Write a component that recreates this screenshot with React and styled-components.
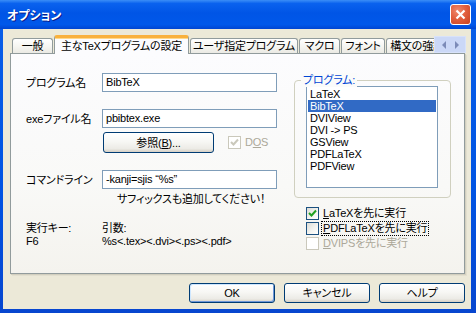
import React from 'react';
import styled, { createGlobalStyle, css } from 'styled-components';

const uiFont = `"Liberation Sans", "Noto Sans CJK JP", sans-serif`;

const GlobalStyle = createGlobalStyle`
  html, body {
    margin: 0;
    padding: 0;
    background: #ffffff;
  }
  body {
    font-family: ${uiFont};
    font-size: 11px;
    letter-spacing: -0.2px;
    font-feature-settings: "palt";
    color: #000000;
  }
`;

const Window = styled.div`
  width: 476px;
  height: 313px;
  display: flex;
  flex-direction: column;
  background: linear-gradient(180deg, #0a5fe8 0%, #0054e3 60%, #0746cf 100%);
  overflow: hidden;
`;

const TitleBar = styled.div`
  flex: none;
  height: 29px;
  display: flex;
  align-items: center;
  justify-content: space-between;
  padding: 0 5px 0 7px;
  background: linear-gradient(
    180deg,
    #3b8ef7 0%,
    #0a62ee 12%,
    #0055e6 45%,
    #0058ea 85%,
    #0045d2 100%
  );
`;

const Title = styled.div`
  color: #ffffff;
  font-weight: bold;
  font-size: 12px;
  letter-spacing: 0;
  text-shadow: 1px 1px 0 #0a1c8a;
`;

const CloseButton = styled.div`
  width: 21px;
  height: 21px;
  box-sizing: border-box;
  border: 1px solid #ffffff;
  border-radius: 3px;
  background: radial-gradient(circle at 35% 30%, #f08a6e 0%, #e2603f 45%, #c7401f 100%);
  display: flex;
  align-items: center;
  justify-content: center;
`;

const Body = styled.div`
  flex: 1;
  margin: 0 5px 4px 3px;
  background: #ece9d8;
  display: flex;
  flex-direction: column;
  padding: 6px 6px 0 7px;
`;

const TabStrip = styled.div`
  position: relative;
  z-index: 1;
  height: 18px;
  display: flex;
  align-items: flex-end;
  gap: 1px;
  padding-left: 2px;
`;

const Tab = styled.div`
  flex: none;
  width: ${p => p.$w}px;
  box-sizing: border-box;
  height: 15px;
  border: 1px solid #919b9c;
  border-bottom: none;
  border-radius: 3px 3px 0 0;
  background: linear-gradient(180deg, #ffffff 0%, #f6f6f2 50%, #ebeae4 100%);
  display: flex;
  align-items: center;
  justify-content: center;
  white-space: nowrap;
  overflow: hidden;
  line-height: 13px;
  padding-top: 1px;

  ${p =>
    p.$active &&
    css`
      height: 19px;
      margin-bottom: -1px;
      border-top: 3px solid #f9b13d;
      background: #fcfcfe;
      padding-top: 0;
      box-shadow: inset 0 1px 0 #ffd88a;
    `}
`;

const TabScroll = styled.div`
  position: absolute;
  right: -1px;
  top: 1px;
  width: 32px;
  height: 17px;
  box-sizing: border-box;
  background: #cbd8f7;
  border: 1px solid #d8e2fa;
  display: flex;
  align-items: center;
  justify-content: space-around;
  padding: 0 3px;
`;

const Panel = styled.div`
  height: 221px;
  box-sizing: border-box;
  border: 1px solid #919b9c;
  background: linear-gradient(180deg, #fcfcfe 0%, #f9f9f7 60%, #f4f3ee 100%);
  box-shadow: 1px 1px 0 #d2cfbf, 2px 2px 0 #e2dfcf;
  display: flex;
  padding-left: 15px;
`;

const LeftCol = styled.div`
  width: 268px;
  flex: none;
  display: flex;
  flex-direction: column;
`;

const FieldRow = styled.div`
  display: grid;
  grid-template-columns: 76px 175px;
  align-items: center;
  margin-top: ${p => p.$mt}px;
`;

const FieldLabel = styled.div`
  line-height: 14px;
  white-space: nowrap;
`;

const TextInput = styled.div`
  height: 19px;
  box-sizing: border-box;
  border: 1px solid #7f9db9;
  background: #ffffff;
  padding: 0 3px;
  line-height: 17px;
  white-space: nowrap;
  overflow: hidden;
`;

const BrowseRow = styled.div`
  display: flex;
  align-items: center;
  margin-top: 4px;
  padding-left: 77px;
  gap: 14px;
`;

const Button = styled.div`
  width: ${p => p.$w}px;
  height: ${p => p.$h || 20}px;
  box-sizing: border-box;
  border: 1px solid #003c74;
  border-radius: 3px;
  background: linear-gradient(180deg, #ffffff 0%, #f7f7f4 45%, #ecebe6 82%, #d6d0c5 100%);
  display: flex;
  align-items: center;
  justify-content: center;
  white-space: nowrap;
  line-height: 14px;

  ${p =>
    p.$default &&
    css`
      box-shadow: inset 1px 1px 0 #cee7ff, inset -1px -1px 0 #6f97d8;
    `}
`;

const Hint = styled.div`
  margin-top: 4px;
  padding-left: 91px;
  line-height: 13px;
  white-space: nowrap;
`;

const InfoGrid = styled.div`
  margin-top: 16px;
  display: grid;
  grid-template-columns: 76px auto;
  line-height: 13px;
`;

const RightCol = styled.div`
  display: flex;
  flex-direction: column;
  padding-top: 26px;
`;

const GroupBox = styled.div`
  position: relative;
  width: 157px;
  height: 118px;
  box-sizing: border-box;
  border: 1px solid #d0d0bf;
  border-radius: 4px;
  padding: 5px 0 0 11px;
`;

const GroupCaption = styled.div`
  position: absolute;
  top: -8px;
  left: 6px;
  padding: 0 2px;
  line-height: 14px;
  color: #0046d5;
  background: #fbfbfa;
`;

const ListBox = styled.div`
  width: 132px;
  height: 102px;
  box-sizing: border-box;
  border: 1px solid #7f9db9;
  background: #ffffff;
  padding: 1px;
`;

const ListItem = styled.div`
  height: 12px;
  line-height: 12px;
  padding-left: 2px;
  white-space: nowrap;

  ${p =>
    p.$selected &&
    css`
      background: #316ac5;
      color: #ffffff;
    `}
`;

const CheckList = styled.div`
  margin-top: 8px;
  padding-left: 12px;
  display: flex;
  flex-direction: column;
`;

const CheckRow = styled.div`
  height: 15px;
  display: flex;
  align-items: center;
  gap: 3px;
  color: ${p => (p.$disabled ? '#aca899' : '#000000')};
  white-space: nowrap;
`;

const CheckBox = styled.div`
  width: 13px;
  height: 13px;
  flex: none;
  box-sizing: border-box;
  border: 1px solid ${p => (p.$disabled ? '#cac8bb' : '#1c5180')};
  background: ${p =>
    p.$disabled ? '#ffffff' : 'linear-gradient(135deg, #dcdcd7 0%, #f3f3ef 55%, #ffffff 100%)'};
  display: flex;
  align-items: center;
  justify-content: center;
`;

const CheckText = styled.span`
  line-height: 13px;
  padding: 0 1px;
  outline: ${p => (p.$focus ? '1px dotted #000000' : 'none')};
`;

const Footer = styled.div`
  display: flex;
  justify-content: flex-end;
  gap: 9px;
  margin-top: 9px;
`;

function Check({ checked, disabled, focus, children }) {
  return (
    <CheckRow $disabled={disabled}>
      <CheckBox $disabled={disabled}>
        {checked && (
          <svg width="9" height="9" viewBox="0 0 9 9">
            <polyline
              points="1,4 3.5,6.5 8,1.5"
              fill="none"
              stroke={disabled ? '#cac8bb' : '#21a121'}
              strokeWidth="2"
            />
          </svg>
        )}
      </CheckBox>
      <CheckText $focus={focus}>{children}</CheckText>
    </CheckRow>
  );
}

const programs = ['LaTeX', 'BibTeX', 'DVIView', 'DVI -> PS', 'GSView', 'PDFLaTeX', 'PDFView'];

export default function App() {
  return (
    <>
      <GlobalStyle />
      <Window>
        <TitleBar>
          <Title>オプション</Title>
          <CloseButton>
            <svg width="11" height="11" viewBox="0 0 11 11">
              <path d="M1.5 1.5 L9.5 9.5 M9.5 1.5 L1.5 9.5" stroke="#ffffff" strokeWidth="2.2" />
            </svg>
          </CloseButton>
        </TitleBar>
        <Body>
          <TabStrip>
            <Tab $w={41}>一般</Tab>
            <Tab $w={135} $active>
              主なTeXプログラムの設定
            </Tab>
            <Tab $w={108}>ユーザ指定プログラム</Tab>
            <Tab $w={41}>マクロ</Tab>
            <Tab $w={44}>フォント</Tab>
            <Tab $w={62}>構文の強調</Tab>
            <TabScroll>
              <svg width="5" height="8" viewBox="0 0 5 8">
                <path d="M4 0 L0 4 L4 8 Z" fill="#7c8bb8" />
              </svg>
              <svg width="5" height="8" viewBox="0 0 5 8">
                <path d="M1 0 L5 4 L1 8 Z" fill="#7c8bb8" />
              </svg>
            </TabScroll>
          </TabStrip>
          <Panel>
            <LeftCol>
              <FieldRow $mt={19}>
                <FieldLabel>プログラム名</FieldLabel>
                <TextInput>BibTeX</TextInput>
              </FieldRow>
              <FieldRow $mt={17}>
                <FieldLabel>exeファイル名</FieldLabel>
                <TextInput>pbibtex.exe</TextInput>
              </FieldRow>
              <BrowseRow>
                <Button $w={111} $h={21}>
                  参照(<u>B</u>)...
                </Button>
                <Check checked disabled>
                  D<u>O</u>S
                </Check>
              </BrowseRow>
              <FieldRow $mt={17}>
                <FieldLabel>コマンドライン</FieldLabel>
                <TextInput>-kanji=sjis “%s”</TextInput>
              </FieldRow>
              <Hint>サフィックスも追加してください！</Hint>
              <InfoGrid>
                <div>実行キー:</div>
                <div>引数:</div>
                <div>F6</div>
                <div>%s&lt;.tex&gt;&lt;.dvi&gt;&lt;.ps&gt;&lt;.pdf&gt;</div>
              </InfoGrid>
            </LeftCol>
            <RightCol>
              <GroupBox>
                <GroupCaption>プログラム:</GroupCaption>
                <ListBox>
                  {programs.map(name => (
                    <ListItem key={name} $selected={name === 'BibTeX'}>
                      {name}
                    </ListItem>
                  ))}
                </ListBox>
              </GroupBox>
              <CheckList>
                <Check checked>
                  <u>L</u>aTeXを先に実行
                </Check>
                <Check focus>
                  <u>P</u>DFLaTeXを先に実行
                </Check>
                <Check disabled>
                  <u>D</u>VIPSを先に実行
                </Check>
              </CheckList>
            </RightCol>
          </Panel>
          <Footer>
            <Button $w={86} $default>
              OK
            </Button>
            <Button $w={86}>キャンセル</Button>
            <Button $w={86}>ヘルプ</Button>
          </Footer>
        </Body>
      </Window>
    </>
  );
}
